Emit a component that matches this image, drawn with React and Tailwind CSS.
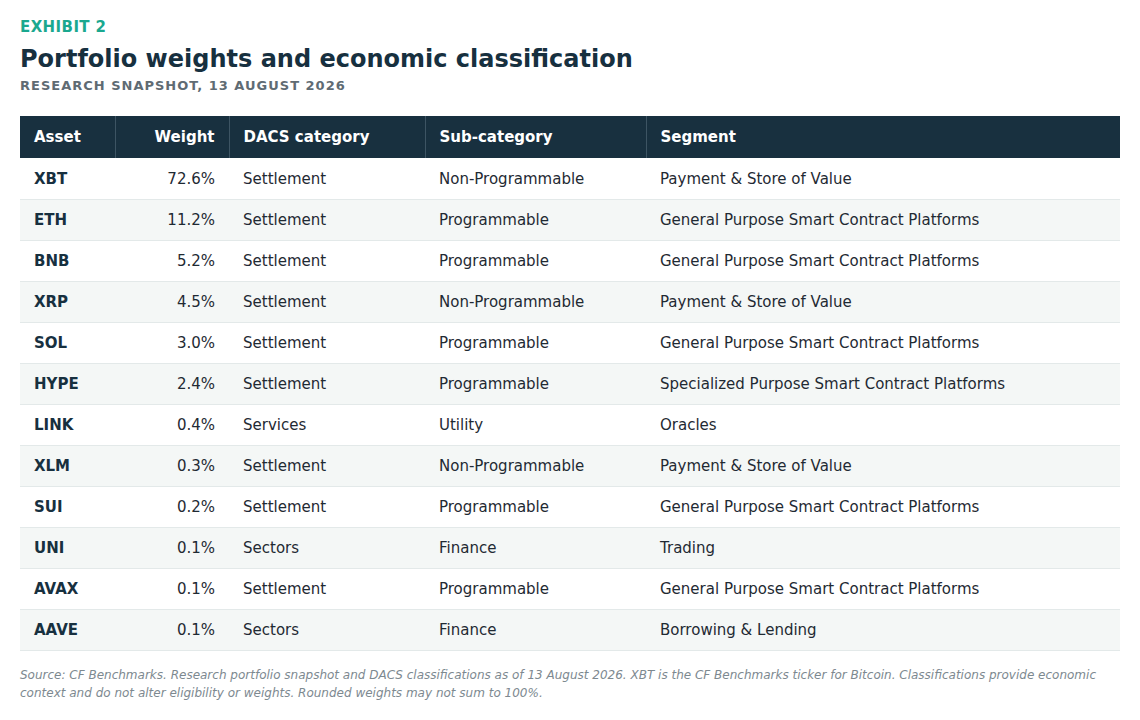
import React from "react";

const rows = [
  ["XBT", "72.6%", "Settlement", "Non-Programmable", "Payment & Store of Value"],
  ["ETH", "11.2%", "Settlement", "Programmable", "General Purpose Smart Contract Platforms"],
  ["BNB", "5.2%", "Settlement", "Programmable", "General Purpose Smart Contract Platforms"],
  ["XRP", "4.5%", "Settlement", "Non-Programmable", "Payment & Store of Value"],
  ["SOL", "3.0%", "Settlement", "Programmable", "General Purpose Smart Contract Platforms"],
  ["HYPE", "2.4%", "Settlement", "Programmable", "Specialized Purpose Smart Contract Platforms"],
  ["LINK", "0.4%", "Services", "Utility", "Oracles"],
  ["XLM", "0.3%", "Settlement", "Non-Programmable", "Payment & Store of Value"],
  ["SUI", "0.2%", "Settlement", "Programmable", "General Purpose Smart Contract Platforms"],
  ["UNI", "0.1%", "Sectors", "Finance", "Trading"],
  ["AVAX", "0.1%", "Settlement", "Programmable", "General Purpose Smart Contract Platforms"],
  ["AAVE", "0.1%", "Sectors", "Finance", "Borrowing & Lending"],
];

const App = () => {
  return (
    <div className="min-h-screen bg-white px-5 pt-[17px] font-['DejaVu_Sans',sans-serif] text-[#1f2a33]">
      <div className="text-[15px] leading-5 font-bold tracking-[0.4px] text-[#1aa88f]">EXHIBIT 2</div>
      <h1 className="mt-[7px] text-[24px] leading-[30px] font-bold text-[#17303f]">
        Portfolio weights and economic classification
      </h1>
      <div className="mt-[3px] text-[13px] leading-[18px] font-bold tracking-[1px] text-[#5f6b73]">
        RESEARCH SNAPSHOT, 13 AUGUST 2026
      </div>

      {/* table */}
      <table className="mt-[21px] w-full table-fixed border-collapse text-[15px]">
        <colgroup>
          <col className="w-[95px]" />
          <col className="w-[114px]" />
          <col className="w-[196px]" />
          <col className="w-[221px]" />
          <col />
        </colgroup>
        <thead>
          <tr className="h-[42px] bg-[#18303f] text-white">
            <th className="px-[14px] pt-px text-left font-bold">Asset</th>
            <th className="border-l border-[#3d5463] px-[14px] pt-px text-right font-bold">Weight</th>
            <th className="border-l border-[#3d5463] px-[14px] pt-px text-left font-bold">DACS category</th>
            <th className="border-l border-[#3d5463] px-[14px] pt-px text-left font-bold">Sub-category</th>
            <th className="border-l border-[#3d5463] px-[14px] pt-px text-left font-bold">Segment</th>
          </tr>
        </thead>
        <tbody>
          {rows.map((r, i) => (
            <tr
              key={r[0]}
              className={`h-[41px] border-b border-[#e3e9e9] ${i % 2 === 1 ? "bg-[#f4f7f6]" : "bg-white"}`}
            >
              <td className="px-[14px] pt-px font-bold text-[#17303f]">{r[0]}</td>
              <td className="px-[14px] pt-px text-right">{r[1]}</td>
              <td className="px-[14px] pt-px">{r[2]}</td>
              <td className="px-[14px] pt-px">{r[3]}</td>
              <td className="px-[14px] pt-px">{r[4]}</td>
            </tr>
          ))}
        </tbody>
      </table>

      <p className="mt-[15px] text-[12px] leading-[18px] italic text-[#7d8990]">
        Source: CF Benchmarks. Research portfolio snapshot and DACS classifications as of 13 August 2026. XBT is the CF
        Benchmarks ticker for Bitcoin. Classifications provide economic context and do not alter eligibility or weights.
        Rounded weights may not sum to 100%.
      </p>
    </div>
  );
};

export default App;
